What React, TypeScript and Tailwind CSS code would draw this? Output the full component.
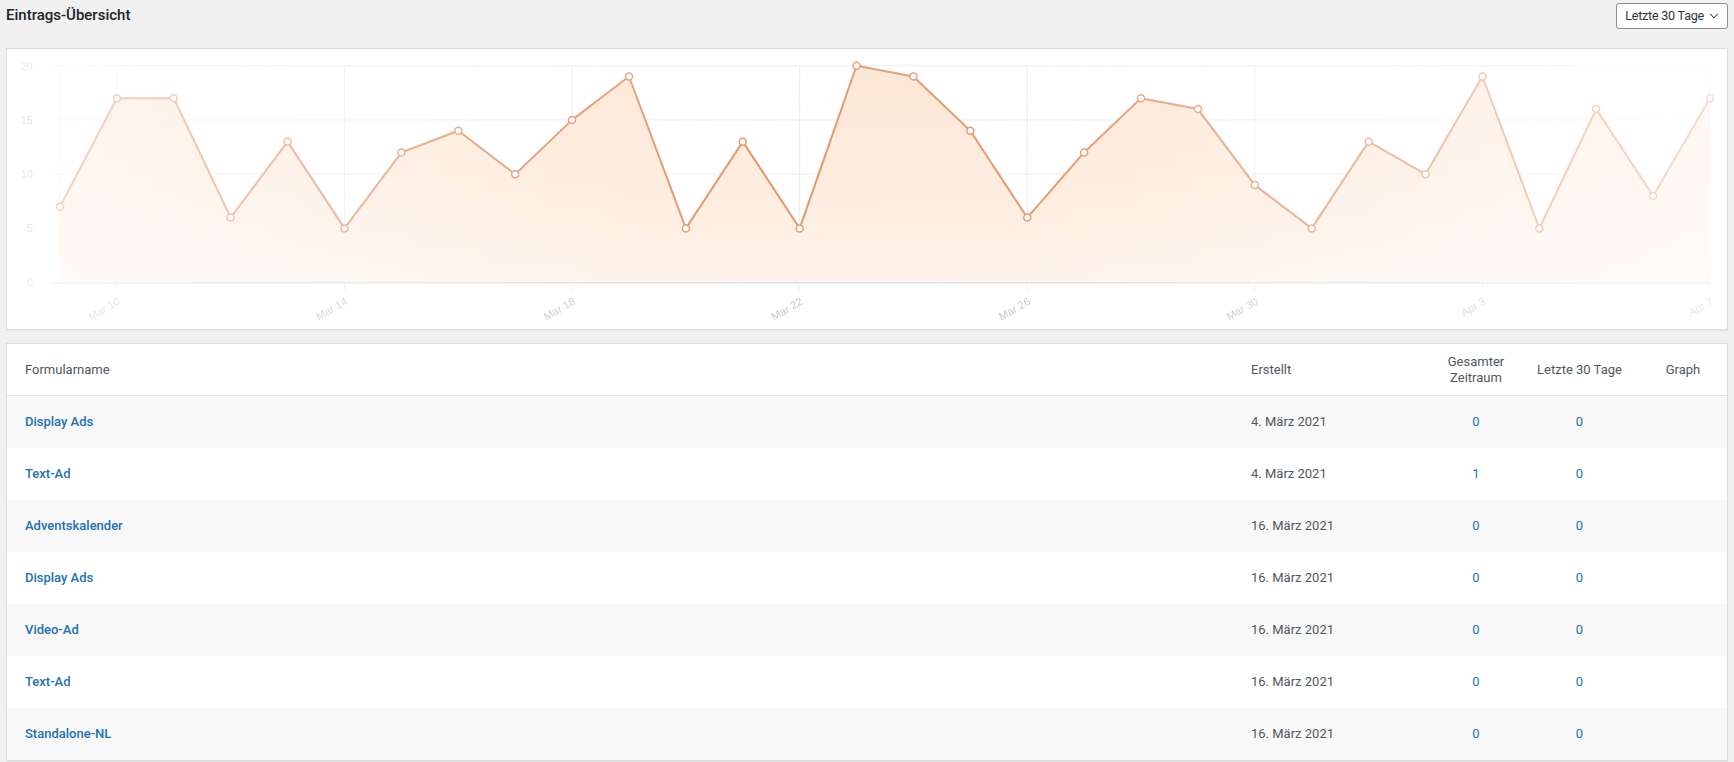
import { ChevronDown } from 'lucide-react';

const values = [7, 17, 17, 6, 13, 5, 12, 14, 10, 15, 19, 5, 13, 5, 20, 19, 14, 6, 12, 17, 16, 9, 5, 13, 10, 19, 5, 16, 8, 17];

const ticks = [
  { i: 1, label: 'Mar 10' },
  { i: 5, label: 'Mar 14' },
  { i: 9, label: 'Mar 18' },
  { i: 13, label: 'Mar 22' },
  { i: 17, label: 'Mar 26' },
  { i: 21, label: 'Mar 30' },
  { i: 25, label: 'Apr 3' },
  { i: 29, label: 'Apr 7' },
];

const rows = [
  { name: 'Display Ads', created: '4. März 2021', total: 0, last30: 0 },
  { name: 'Text-Ad', created: '4. März 2021', total: 1, last30: 0 },
  { name: 'Adventskalender', created: '16. März 2021', total: 0, last30: 0 },
  { name: 'Display Ads', created: '16. März 2021', total: 0, last30: 0 },
  { name: 'Video-Ad', created: '16. März 2021', total: 0, last30: 0 },
  { name: 'Text-Ad', created: '16. März 2021', total: 0, last30: 0 },
  { name: 'Standalone-NL', created: '16. März 2021', total: 0, last30: 0 },
];

// chart area in page coordinates (the svg viewBox uses the same numbers)
const X0 = 60;
const X1 = 1710;
const TOP = 65.7;
const BOTTOM = 282.7;

const px = (i: number) => X0 + (i * (X1 - X0)) / (values.length - 1);
const py = (v: number) => BOTTOM - (v * (BOTTOM - TOP)) / 20;

function EntriesChart() {
  const pts = values.map((v, i) => [px(i), py(v)]);
  const line = pts.map(([x, y], i) => `${i ? 'L' : 'M'}${x.toFixed(1)} ${y.toFixed(1)}`).join(' ');
  const area = `${line} L${X1} ${BOTTOM} L${X0} ${BOTTOM} Z`;

  return (
    <svg viewBox="7 49 1720 280" width="1720" height="280" className="block">
      <defs>
        <radialGradient
          id="fade"
          gradientUnits="userSpaceOnUse"
          cx="840"
          cy="175"
          r="860"
          gradientTransform="translate(840 175) scale(1 0.4) translate(-840 -175)"
        >
          <stop offset="0" stopColor="#ffffff" />
          <stop offset="0.3" stopColor="#e8e8e8" />
          <stop offset="0.6" stopColor="#a8a8a8" />
          <stop offset="0.9" stopColor="#6b6b6b" />
          <stop offset="1" stopColor="#555555" />
        </radialGradient>
        <mask id="vignette" maskUnits="userSpaceOnUse" x="7" y="49" width="1720" height="280">
          <rect x="7" y="49" width="1720" height="280" fill="url(#fade)" />
        </mask>
        <linearGradient id="areaFill" x1="0" y1="0" x2="0" y2="1">
          <stop offset="0" stopColor="#fde5d2" />
          <stop offset="1" stopColor="#fef2e8" />
        </linearGradient>
      </defs>

      <g mask="url(#vignette)">
        {[5, 10, 15, 20].map((v) => (
          <line key={v} x1={50} x2={X1} y1={py(v)} y2={py(v)} stroke="#ebebeb" strokeWidth="1" />
        ))}
        <line x1={X0} x2={X0} y1={TOP} y2={BOTTOM} stroke="#ebebeb" strokeWidth="1" />
        {ticks.map((t) => (
          <line key={t.i} x1={px(t.i)} x2={px(t.i)} y1={TOP} y2={BOTTOM + 8} stroke="#ebebeb" strokeWidth="1" />
        ))}

        <path d={area} fill="url(#areaFill)" />
        <line x1={50} x2={X1} y1={BOTTOM} y2={BOTTOM} stroke="#dedede" strokeWidth="1.5" />
        <path d={line} fill="none" stroke="#e2966a" strokeWidth="2" strokeLinejoin="round" />
        {pts.map(([x, y], i) => (
          <circle key={i} cx={x} cy={y} r="3.5" fill="#ffffff" stroke="#e2966a" strokeWidth="1.5" />
        ))}

        <g fontFamily='"Liberation Sans", Arial, sans-serif' fontSize="11" fill="#bcbcbc">
          {[0, 5, 10, 15, 20].map((v) => (
            <text key={v} x={33} y={py(v) + 4} textAnchor="end">
              {v}
            </text>
          ))}
          {ticks.map((t) => (
            <text
              key={t.i}
              x={px(t.i) + 4}
              y={BOTTOM + 21}
              textAnchor="end"
              transform={`rotate(-30 ${px(t.i) + 4} ${BOTTOM + 21})`}
            >
              {t.label}
            </text>
          ))}
        </g>
      </g>
    </svg>
  );
}

export default function App() {
  return (
    <div
      className="min-h-screen bg-[#f0f0f1] px-[6px] text-[13px] text-[#50575e]"
      style={{ fontFamily: '"Segoe UI", Roboto, "Noto Sans", sans-serif' }}
    >
      <div className="flex h-[48px] items-start justify-between pt-[3px]">
        <h2 className="mt-[2px] text-[15px] font-medium leading-[20px] text-[#1d2327]">Eintrags-Übersicht</h2>
        <button className="flex h-[26px] items-center gap-[3px] whitespace-nowrap rounded-[3px] border border-[#8c8f94] bg-white pl-[8px] pr-[6px] text-[12.5px] tracking-[-0.2px] text-[#2c3338]">
          <span>Letzte 30 Tage</span>
          <ChevronDown size={14} strokeWidth={1.8} />
        </button>
      </div>

      <div className="h-[282px] border border-[#dcdcde] bg-white shadow-[0_1px_1px_rgba(0,0,0,0.04)]">
        <EntriesChart />
      </div>

      <div className="mt-[13px] border border-[#dcdcde] bg-white shadow-[0_1px_1px_rgba(0,0,0,0.04)]">
        <div className="grid h-[52px] grid-cols-[1fr_199px_88px_119px_88px] items-center border-b border-[#e2e2e2] leading-[16px]">
          <div className="pl-[18px]">Formularname</div>
          <div className="pl-[18px]">Erstellt</div>
          <div className="px-[8px] text-center">Gesamter Zeitraum</div>
          <div className="px-[8px] text-center">Letzte 30 Tage</div>
          <div className="px-[8px] text-center">Graph</div>
        </div>
        {rows.map((r, i) => (
          <div
            key={i}
            className={`grid h-[52px] grid-cols-[1fr_199px_88px_119px_88px] items-center ${i % 2 === 0 ? 'bg-[#f8f8f8]' : 'bg-white'}`}
          >
            <div className="pl-[18px]">
              <a href="#" className="font-medium text-[#2271b1]">
                {r.name}
              </a>
            </div>
            <div className="pl-[18px]">{r.created}</div>
            <div className="text-center">
              <a href="#" className="text-[#2271b1]">
                {r.total}
              </a>
            </div>
            <div className="text-center">
              <a href="#" className="text-[#2271b1]">
                {r.last30}
              </a>
            </div>
            <div />
          </div>
        ))}
      </div>
    </div>
  );
}
